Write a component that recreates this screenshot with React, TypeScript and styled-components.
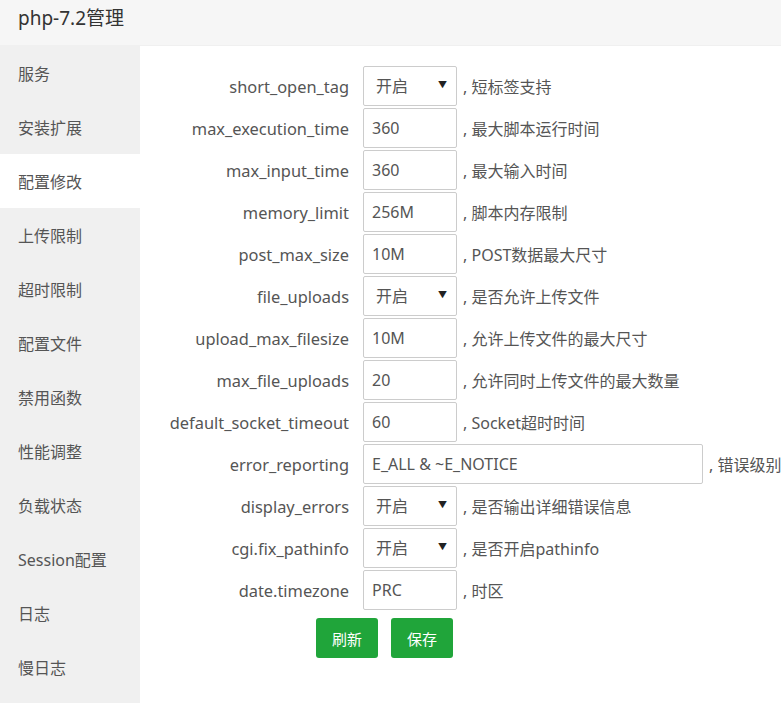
import React from 'react'
import styled, { createGlobalStyle } from 'styled-components'

const GlobalStyle = createGlobalStyle`
  html, body {
    margin: 0;
    padding: 0;
    height: 100%;
    background: #fff;
  }
  body {
    font-family: "Noto Sans", "Noto Sans CJK SC", sans-serif;
    color: #555;
  }
  #root {
    height: 100%;
  }
`

const Page = styled.div`
  display: flex;
  flex-direction: column;
  height: 100vh;
  overflow: hidden;
`

const Header = styled.div`
  height: 46px;
  box-sizing: border-box;
  flex: none;
  background: #f6f6f6;
  border-bottom: 1px solid #f0f0f0;
  display: flex;
  align-items: center;
  padding: 0 0 11px 18px;
  font-size: 19px;
  color: #333;
`

const Body = styled.div`
  display: flex;
  flex: 1;
  min-height: 0;
`

const Side = styled.div`
  width: 140px;
  flex: none;
  background: #f0f0f0;
`

const SideItem = styled.div<{ $active?: boolean }>`
  height: 54px;
  display: flex;
  align-items: center;
  padding-left: 18px;
  font-size: 16px;
  color: #555;
  background: ${(p) => (p.$active ? '#fff' : 'transparent')};
  cursor: pointer;
`

const Main = styled.div`
  flex: 1;
  padding-top: 20px;
`

const Row = styled.div`
  display: flex;
  align-items: center;
  height: 40px;
  margin-bottom: 2px;
`

const Label = styled.div`
  width: 209px;
  text-align: right;
  padding-right: 14px;
  font-size: 16.4px;
  color: #555;
  white-space: nowrap;
`

const Input = styled.input<{ $wide?: boolean }>`
  box-sizing: border-box;
  width: ${(p) => (p.$wide ? '340px' : '94px')};
  height: 40px;
  border: 1px solid #ccc;
  border-radius: 2px;
  padding: 0 8px;
  font-family: inherit;
  font-size: 16px;
  color: #555;
  outline: none;
`

const SelectWrap = styled.div`
  position: relative;
  width: 94px;
  height: 40px;
`

const Select = styled.select`
  appearance: none;
  box-sizing: border-box;
  width: 100%;
  height: 100%;
  border: 1px solid #ccc;
  border-radius: 2px;
  padding: 0 12px;
  font-family: inherit;
  font-size: 16px;
  color: #555;
  background: #fff;
  outline: none;
`

const Arrow = styled.span`
  position: absolute;
  right: 10px;
  top: 14px;
  font-size: 9px;
  line-height: 1;
  color: #222;
  pointer-events: none;
`

const Desc = styled.span`
  margin-left: 6px;
  font-size: 16px;
  color: #555;
  white-space: nowrap;
`

const Buttons = styled.div`
  display: flex;
  gap: 13px;
  margin-left: 176px;
  margin-top: 8px;
`

const Button = styled.button`
  width: 62px;
  height: 40px;
  border: none;
  border-radius: 3px;
  background: #20a53a;
  color: #fff;
  font-family: inherit;
  font-size: 15px;
  cursor: pointer;
`

type Field = {
  name: string
  value: string
  desc: string
  select?: boolean
  wide?: boolean
}

const fields: Field[] = [
  { name: 'short_open_tag', value: '开启', desc: '短标签支持', select: true },
  { name: 'max_execution_time', value: '360', desc: '最大脚本运行时间' },
  { name: 'max_input_time', value: '360', desc: '最大输入时间' },
  { name: 'memory_limit', value: '256M', desc: '脚本内存限制' },
  { name: 'post_max_size', value: '10M', desc: 'POST数据最大尺寸' },
  { name: 'file_uploads', value: '开启', desc: '是否允许上传文件', select: true },
  { name: 'upload_max_filesize', value: '10M', desc: '允许上传文件的最大尺寸' },
  { name: 'max_file_uploads', value: '20', desc: '允许同时上传文件的最大数量' },
  { name: 'default_socket_timeout', value: '60', desc: 'Socket超时时间' },
  { name: 'error_reporting', value: 'E_ALL & ~E_NOTICE', desc: '错误级别', wide: true },
  { name: 'display_errors', value: '开启', desc: '是否输出详细错误信息', select: true },
  { name: 'cgi.fix_pathinfo', value: '开启', desc: '是否开启pathinfo', select: true },
  { name: 'date.timezone', value: 'PRC', desc: '时区' },
]

const menu = ['服务', '安装扩展', '配置修改', '上传限制', '超时限制', '配置文件', '禁用函数', '性能调整', '负载状态', 'Session配置', '日志', '慢日志']

const App: React.FC = () => {
  return (
    <Page>
      <GlobalStyle />
      <Header>php-7.2管理</Header>
      <Body>
        <Side>
          {menu.map((m) => (
            <SideItem key={m} $active={m === '配置修改'}>
              {m}
            </SideItem>
          ))}
        </Side>
        <Main>
          {fields.map((f) => (
            <Row key={f.name}>
              <Label>{f.name}</Label>
              {f.select ? (
                <SelectWrap>
                  <Select defaultValue="1">
                    <option value="1">开启</option>
                    <option value="0">关闭</option>
                  </Select>
                  <Arrow>▼</Arrow>
                </SelectWrap>
              ) : (
                <Input $wide={f.wide} defaultValue={f.value} />
              )}
              <Desc>, {f.desc}</Desc>
            </Row>
          ))}
          <Buttons>
            <Button>刷新</Button>
            <Button>保存</Button>
          </Buttons>
        </Main>
      </Body>
    </Page>
  )
}

export default App
